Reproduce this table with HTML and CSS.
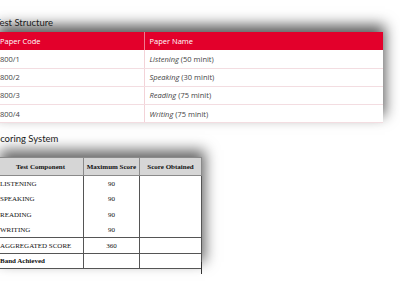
FILE: index.html
```html
<!DOCTYPE html>
<html>
<head>
<meta charset="utf-8">
<link rel="stylesheet" href="styles.css">
</head>
<body>
<div class="page">
  <section class="block block-test">
    <h2 class="title">Test Structure</h2>
    <table class="paper">
      <thead>
        <tr><th class="c1">Paper Code</th><th>Paper Name</th></tr>
      </thead>
      <tbody>
        <tr><td>800/1</td><td><em>Listening</em> (50 minit)</td></tr>
        <tr><td>800/2</td><td><em>Speaking</em> (30 minit)</td></tr>
        <tr><td>800/3</td><td><em>Reading</em> (75 minit)</td></tr>
        <tr><td>800/4</td><td><em>Writing</em> (75 minit)</td></tr>
      </tbody>
    </table>
  </section>
  <section class="block block-score">
    <h2 class="title">Scoring System</h2>
    <div class="score-wrap">
      <table class="score">
        <thead>
          <tr><th class="s1">Test Component</th><th class="s2">Maximum Score</th><th class="s3">Score Obtained</th></tr>
        </thead>
        <tbody>
          <tr class="plain"><td>LISTENING</td><td class="num">90</td><td></td></tr>
          <tr class="plain"><td>SPEAKING</td><td class="num">90</td><td></td></tr>
          <tr class="plain"><td>READING</td><td class="num">90</td><td></td></tr>
          <tr class="plain"><td>WRITING</td><td class="num">90</td><td></td></tr>
          <tr class="ruled"><td>AGGREGATED SCORE</td><td class="num">360</td><td></td></tr>
          <tr class="ruled"><td class="bold">Band Achieved</td><td></td><td></td></tr>
        </tbody>
      </table>
      <span class="stray"></span>
    </div>
  </section>
</div>
</body>
</html>
```

FILE: styles.css
```css
* { box-sizing: border-box; }
html, body { margin: 0; padding: 0; background: #fff; }
body { width: 400px; height: 284px; overflow: hidden; }

.page {
  padding-top: 17px;
}

.title {
  margin: 0;
  font-family: Lato, "Open Sans", sans-serif;
  font-weight: 400;
  font-size: 9.5px;
  line-height: 12px;
  color: #1a1a1a;
  position: relative;
  z-index: 1;
}

.block-test { margin-left: -5px; }
.block-test .title { margin-bottom: 3px; }

.paper {
  width: 388px;
  border-collapse: collapse;
  background: #fff;
  box-shadow: 2px -7px 13px rgba(0,0,0,0.65);
  font-family: "Open Sans", sans-serif;
  font-size: 7.5px;
  color: #444;
}
.paper th {
  background: #e3002b;
  color: #fff;
  font-weight: 500;
  text-align: left;
  height: 18px;
  padding: 0 5px;
  border-right: 1px solid #f07a90;
}
.paper th.c1 { width: 149px; }
.paper th:last-child { border-right: 0; }
.paper td {
  height: 18.2px;
  padding: 0 5px;
  border-bottom: 1px solid #f3dde1;
  border-right: 1px solid #f3d3d8;
}
.paper td:last-child { border-right: 0; }
.paper em { font-style: italic; }

.block-score {
  margin-top: 10px;
  margin-left: -5px;
}
.block-score .title { margin-bottom: 12px; }

.score-wrap {
  position: relative;
  margin-left: 2px;
  width: 204px;
}
.score {
  width: 204px;
  border-collapse: collapse;
  table-layout: fixed;
  background: #fff;
  box-shadow: 3px -7px 13px rgba(0,0,0,0.6);
  font-family: "Liberation Serif", "Times New Roman", serif;
  font-size: 7px;
  color: #111;
}
.score th {
  background: #d6d6d6;
  font-weight: 700;
  height: 18px;
  padding: 0;
  text-align: center;
  border: 1px solid #8a8a8a;
}
.score th.s1 { width: 86px; }
.score th.s2 { width: 56px; }
.score th.s3 { width: 62px; }
.score td {
  height: 15.5px;
  padding: 0 0 0 2px;
  border-left: 1px solid #555;
  border-right: 1px solid #555;
}
.score tr.ruled td { border-top: 1px solid #555; }
.score tr:last-child td { border-bottom: 1px solid #555; }
.score td.num { text-align: center; padding: 0; }
.score td.bold { font-weight: 700; }

.stray {
  position: absolute;
  right: -1px;
  bottom: -5px;
  width: 1px;
  height: 12px;
  background: #333;
}
```
